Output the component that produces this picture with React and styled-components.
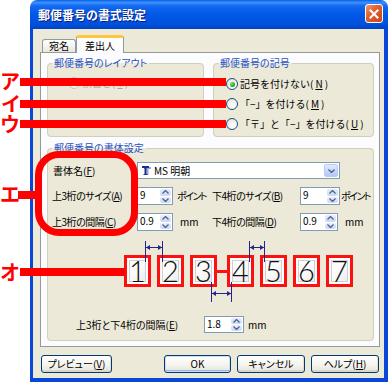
import React from 'react';
import styled, { createGlobalStyle, css } from 'styled-components';

const GlobalStyle = createGlobalStyle`
  html, body { margin: 0; padding: 0; background: #ffffff; }
  body {
    font-family: "Noto Sans CJK JP", "Noto Sans", sans-serif;
    font-size: 10px;
    color: #000;
  }
  * { box-sizing: border-box; }
`;

const ui = (lh = 12, prop = true) => css`
  font-family: "Noto Sans CJK JP", "Noto Sans", sans-serif;
  font-size: 10px;
  line-height: ${lh}px;
  font-feature-settings: ${prop ? '"palt" 1' : 'normal'};
`;

const Page = styled.div`
  position: relative;
  width: 388px;
  height: 382px;
  padding-left: 30px;
  overflow: hidden;
  background: #fff;
`;

const Window = styled.div`
  width: 358px;
  height: 382px;
  display: flex;
  flex-direction: column;
`;

const TitleBar = styled.div`
  height: 29px;
  flex: none;
  display: flex;
  align-items: center;
  padding: 0 5px 0 8px;
  border-radius: 7px 7px 0 0;
  background: linear-gradient(180deg, #0A5FE8 0%, #3C93FC 9%, #1468F0 20%, #0058E6 50%, #0052DE 80%, #0043C4 100%);
`;

const Title = styled.span`
  flex: 1;
  color: #fff;
  font-family: "Noto Sans CJK JP", sans-serif;
  font-weight: bold;
  font-size: 12px;
  line-height: 14px;
  text-shadow: 1px 1px 0 #0A1A7A;
`;

const CloseButton = styled.div`
  width: 18px;
  height: 19px;
  margin-top: -2px;
  border: 1px solid #fff;
  border-radius: 3px;
  background: linear-gradient(135deg, #F09A78 0%, #E2602F 40%, #C9441C 100%);
  display: flex;
  align-items: center;
  justify-content: center;
`;

const Frame = styled.div`
  flex: 1;
  display: flex;
  flex-direction: column;
  background: #ECE9D8;
  border-style: solid;
  border-color: #0A46D8;
  border-width: 0 4px 4px 3px;
  padding: 6px 4px 0 7px;
`;

const TabRow = styled.div`
  height: 17px;
  display: flex;
  align-items: flex-end;
  padding-left: 2px;
  position: relative;
  z-index: 1;
`;

const Tab = styled.div`
  height: ${p => (p.$active ? 18 : 13)}px;
  padding: 0 ${p => (p.$active ? 8 : 6)}px;
  margin-bottom: ${p => (p.$active ? -1 : 0)}px;
  border: 1px solid #919B9C;
  border-bottom: none;
  border-top: ${p => (p.$active ? '3px solid #FFC83C' : '1px solid #919B9C')};
  border-radius: 3px 3px 0 0;
  background: ${p => (p.$active ? '#FCFCFE' : 'linear-gradient(180deg, #FFFFFF 0%, #F3F2EC 60%, #E8E6DC 100%)')};
  ${ui(12, false)}
  display: flex;
  align-items: center;
  white-space: nowrap;
`;

const Panel = styled.div`
  height: 295px;
  border: 1px solid #919B9C;
  background: #FCFCFE;
  padding: 4px 5px 5px 6px;
  display: flex;
  flex-direction: column;
  gap: 5px;
`;

const TopRow = styled.div`
  height: 80px;
  display: flex;
  gap: 9px;
`;

const Group = styled.fieldset`
  margin: 0;
  padding: 0;
  min-width: 0;
  border: 1px solid #D0D0BF;
  border-radius: 4px;
  background: #ECE9D8;
  height: ${p => p.$h}px;
  width: ${p => (p.$w ? `${p.$w}px` : 'auto')};
  flex: ${p => (p.$w ? 'none' : '1')};
`;

const Legend = styled.legend`
  padding: 0 2px;
  margin-left: 4px;
  color: #1F50C0;
  ${ui(12)}
`;

const RadioList = styled.div`
  display: flex;
  flex-direction: column;
  gap: 6px;
  padding: ${p => p.$pad};
`;

const RadioRow = styled.label`
  height: 14px;
  display: flex;
  align-items: center;
  gap: 2px;
  ${ui(14, false)}
  color: ${p => (p.$disabled ? '#ACA899' : '#000')};
  white-space: nowrap;
`;

const RadioDot = styled.span`
  width: 12px;
  height: 12px;
  flex: none;
  border-radius: 50%;
  border: 1px solid ${p => (p.$disabled ? '#CAC8BB' : '#1C5180')};
  background: radial-gradient(circle at 65% 65%, #FFFFFF 0%, #F2F2EC 45%, #D8D7CC 100%);
  display: flex;
  align-items: center;
  justify-content: center;
  &::after {
    content: '';
    display: ${p => (p.$checked ? 'block' : 'none')};
    width: 5px;
    height: 5px;
    border-radius: 50%;
    background: radial-gradient(circle at 35% 35%, #7EE07E 0%, #22A522 60%, #178A17 100%);
  }
`;

const GroupBody = styled.div`
  display: flex;
  flex-direction: column;
  padding: 8px 0 0 4px;
`;

const FormGrid = styled.div`
  display: grid;
  grid-template-columns: 85px 36px 39px 88px 40px auto;
  grid-template-rows: 17px 18px 18px;
  row-gap: 8px;
  align-items: center;
  ${ui(12)}
  white-space: nowrap;
`;

const FieldLabel = styled.span`
  padding-left: ${p => p.$indent || 0}px;
  letter-spacing: ${p => p.$ls || 0}px;
`;

const Unit = styled.span`
  padding-left: ${p => p.$indent || 0}px;
  letter-spacing: ${p => p.$ls || 0}px;
`;

const Combo = styled.div`
  grid-column: 2 / 6;
  height: 17px;
  display: flex;
  align-items: stretch;
  border: 1px solid #7F9DB9;
  background: #fff;
  padding: 1px;
`;

const ComboValue = styled.div`
  flex: 1;
  display: flex;
  align-items: center;
  gap: 3px;
  padding-left: 3px;
  ${ui(12, false)}
`;

const DropButton = styled.div`
  width: 14px;
  border-radius: 2px;
  border: 1px solid #B9CBF3;
  background: linear-gradient(180deg, #E2EAFE 0%, #C7D6FA 55%, #B5C8F5 100%);
  display: flex;
  align-items: center;
  justify-content: center;
`;

const SpinBox = styled.div`
  width: ${p => p.$w}px;
  height: ${p => p.$h || 18}px;
  display: flex;
  border: 1px solid #7F9DB9;
  background: #fff;
  padding: 1px;
`;

const SpinValue = styled.div`
  flex: 1;
  padding-left: 1px;
  ${ui(12)}
  display: flex;
  align-items: flex-start;
`;

const SpinButtons = styled.div`
  width: 11px;
  display: flex;
  flex-direction: column;
  gap: 1px;
`;

const SpinBtn = styled.div`
  flex: 1;
  border-radius: 2px;
  background: linear-gradient(180deg, #E6EDFC 0%, #CBD8F6 100%);
  display: flex;
  align-items: center;
  justify-content: center;
`;

const DigitRow = styled.div`
  position: relative;
  height: 32px;
  margin-top: 24px;
  padding-left: 72px;
  display: flex;
  align-items: center;
  gap: 6px;
`;

const DigitBox = styled.div`
  width: 27px;
  height: 32px;
  flex: none;
  border: 3px solid #FF1010;
  background: #fff;
  padding: 2px;
`;

const DigitCell = styled.div`
  width: 100%;
  height: 100%;
  border: 1px solid #CFCFCF;
  background: linear-gradient(135deg, #FFFFFF 30%, #EDEDED 100%);
  display: flex;
  align-items: center;
  justify-content: center;
  font-family: Lato, "Noto Sans", sans-serif;
  font-weight: 300;
  font-size: 29px;
  line-height: 22px;
  color: #111;
  overflow: visible;
`;

const Connector = styled.div`
  width: 10px;
  height: 3px;
  margin: 0 -6px;
  flex: none;
  background: #FF1010;
`;

const Markers = styled.svg`
  position: absolute;
  left: 0;
  top: -15px;
  pointer-events: none;
`;

const GapRow = styled.div`
  margin-top: 29px;
  height: 17px;
  display: flex;
  align-items: center;
  padding-left: 24px;
  ${ui(12)}
  white-space: nowrap;
`;

const GapLabel = styled.span`
  width: 128px;
`;

const ButtonRow = styled.div`
  display: flex;
  gap: 6px;
  padding: 8px 1px 0 1px;
`;

const Button = styled.div`
  width: ${p => p.$w}px;
  height: 18px;
  border: 1px solid #003C74;
  border-radius: 3px;
  background: linear-gradient(180deg, #FFFFFF 0%, #F5F4EF 55%, #E6E3D8 100%);
  box-shadow: ${p => (p.$default
    ? 'inset 0 0 0 1px #CEDDF8, inset 0 -1px 0 1px #98B4EA'
    : 'inset 0 -2px 0 #DCD7CB, inset -1px 0 0 #E2DED2')};
  ${ui(16)}
  text-align: center;
  white-space: nowrap;
  margin-right: ${p => (p.$push ? 'auto' : '0')};
`;

const Mark = styled.span`
  position: absolute;
  left: ${p => p.$x}px;
  top: ${p => p.$y}px;
  color: #FF0000;
  font-family: "Noto Sans CJK JP", sans-serif;
  font-weight: bold;
  font-size: 20px;
  line-height: 18px;
`;

const Bar = styled.div`
  position: absolute;
  left: ${p => p.$x}px;
  top: ${p => p.$y}px;
  width: ${p => p.$w}px;
  height: 8px;
  background: #FF0000;
`;

const Ring = styled.div`
  position: absolute;
  left: 35px;
  top: 151px;
  width: 103px;
  height: 85px;
  border: 7px solid #FF0000;
  border-radius: 24px;
`;

const Chevron = ({ up }) => (
  <svg width="7" height="4" viewBox="0 0 7 4">
    <polyline
      points={up ? '0.5,3.5 3.5,0.5 6.5,3.5' : '0.5,0.5 3.5,3.5 6.5,0.5'}
      fill="none"
      stroke="#4D6185"
      strokeWidth="1.3"
    />
  </svg>
);

const Spin = ({ value, w, h }) => (
  <SpinBox $w={w} $h={h}>
    <SpinValue>{value}</SpinValue>
    <SpinButtons>
      <SpinBtn><Chevron up /></SpinBtn>
      <SpinBtn><Chevron /></SpinBtn>
    </SpinButtons>
  </SpinBox>
);

const FontIcon = () => (
  <svg width="9" height="10" viewBox="0 0 9 10">
    <rect x="2" y="1" width="7" height="2" fill="#9AA6C8" />
    <rect x="4.5" y="1" width="2" height="8" fill="#9AA6C8" />
    <rect x="0" y="0" width="7" height="2" fill="#1A2C9A" />
    <rect x="2.5" y="0" width="2" height="9" fill="#1A2C9A" />
    <rect x="1.5" y="8" width="4" height="1" fill="#1A2C9A" />
  </svg>
);

const U = styled.span`
  text-decoration: underline;
`;

const digits = ['1', '2', '3', '4', '5', '6', '7'];

export default function App() {
  return (
    <>
      <GlobalStyle />
      <Page>
        <Window>
          <TitleBar>
            <Title>郵便番号の書式設定</Title>
            <CloseButton>
              <svg width="10" height="10" viewBox="0 0 10 10">
                <path d="M1.5 1.5 L8.5 8.5 M8.5 1.5 L1.5 8.5" stroke="#fff" strokeWidth="2" strokeLinecap="square" />
              </svg>
            </CloseButton>
          </TitleBar>
          <Frame>
            <TabRow>
              <Tab>宛名</Tab>
              <Tab $active>差出人</Tab>
            </TabRow>
            <Panel>
              <TopRow>
                <Group $h={80} $w={157}>
                  <Legend>郵便番号のレイアウト</Legend>
                  <RadioList $pad="7px 0 0 20px">
                    <RadioRow $disabled>
                      <RadioDot $disabled />
                      横書き(<U>Y</U>)
                    </RadioRow>
                  </RadioList>
                </Group>
                <Group $h={80}>
                  <Legend>郵便番号の記号</Legend>
                  <RadioList $pad="8px 0 0 12px">
                    <RadioRow>
                      <RadioDot $checked />
                      記号を付けない(<U>N</U>)
                    </RadioRow>
                    <RadioRow>
                      <RadioDot />
                      「−」を付ける(<U>M</U>)
                    </RadioRow>
                    <RadioRow>
                      <RadioDot />
                      「〒」と「−」を付ける(<U>U</U>)
                    </RadioRow>
                  </RadioList>
                </Group>
              </TopRow>
              <Group $h={199}>
                <Legend>郵便番号の書体設定</Legend>
                <GroupBody>
                  <FormGrid>
                    <FieldLabel $indent={1}>書体名(<U>F</U>)</FieldLabel>
                    <Combo>
                      <ComboValue>
                        <FontIcon />
                        MS 明朝
                      </ComboValue>
                      <DropButton><Chevron /></DropButton>
                    </Combo>
                    <span />

                    <FieldLabel $ls={-0.5}>上3桁のサイズ(<U>A</U>)</FieldLabel>
                    <Spin value="9" w={36} />
                    <Unit $indent={4} $ls={-1.5}>ポイント</Unit>
                    <FieldLabel $ls={-0.5}>下4桁のサイズ(<U>B</U>)</FieldLabel>
                    <Spin value="9" w={40} />
                    <Unit $indent={1} $ls={-1.5}>ポイント</Unit>

                    <FieldLabel $ls={-0.5}>上3桁の間隔(<U>C</U>)</FieldLabel>
                    <Spin value="0.9" w={36} />
                    <Unit $indent={7}>mm</Unit>
                    <FieldLabel $ls={-0.5}>下4桁の間隔(<U>D</U>)</FieldLabel>
                    <Spin value="0.9" w={38} />
                    <Unit $indent={5}>mm</Unit>
                  </FormGrid>

                  <DigitRow>
                    {digits.map((d, i) => (
                      <React.Fragment key={d}>
                        {i === 3 && <Connector />}
                        <DigitBox>
                          <DigitCell>{d}</DigitCell>
                        </DigitBox>
                      </React.Fragment>
                    ))}
                    <Markers width="320" height="65" viewBox="0 0 320 65">
                      <g stroke="#24248C" strokeWidth="1" fill="none">
                        <path d="M93.5 1 V22 M110.5 1 V22 M94 7.5 H110" />
                        <path d="M197.5 1 V22 M212.5 1 V22 M198 7.5 H212" />
                        <path d="M159.5 42 V62 M179.5 42 V62 M160 53.5 H179" />
                      </g>
                      <g fill="#24248C">
                        <path d="M94 7.5 L98 5 V10 Z M110 7.5 L106 5 V10 Z" />
                        <path d="M198 7.5 L202 5 V10 Z M212 7.5 L208 5 V10 Z" />
                        <path d="M160 53.5 L164 51 V56 Z M179 53.5 L175 51 V56 Z" />
                      </g>
                    </Markers>
                  </DigitRow>

                  <GapRow>
                    <GapLabel>上3桁と下4桁の間隔(<U>E</U>)</GapLabel>
                    <Spin value="1.8" w={40} h={17} />
                    <Unit $indent={4}>mm</Unit>
                  </GapRow>
                </GroupBody>
              </Group>
            </Panel>
            <ButtonRow>
              <Button $w={71} $push>プレビュー(<U>V</U>)</Button>
              <Button $w={67} $default>OK</Button>
              <Button $w={68}>キャンセル</Button>
              <Button $w={68}>ヘルプ(<U>H</U>)</Button>
            </ButtonRow>
          </Frame>
        </Window>

        <Mark $x={0} $y={72}>ア</Mark>
        <Bar $x={20} $y={78} $w={206} />
        <Mark $x={1} $y={95}>イ</Mark>
        <Bar $x={20} $y={100} $w={206} />
        <Mark $x={0} $y={115}>ウ</Mark>
        <Bar $x={20} $y={120} $w={206} />

        <Ring />
        <Mark $x={0} $y={185}>エ</Mark>
        <Bar $x={18} $y={191} $w={18} />

        <Mark $x={0} $y={263}>オ</Mark>
        <Bar $x={20} $y={268} $w={105} />
      </Page>
    </>
  );
}
